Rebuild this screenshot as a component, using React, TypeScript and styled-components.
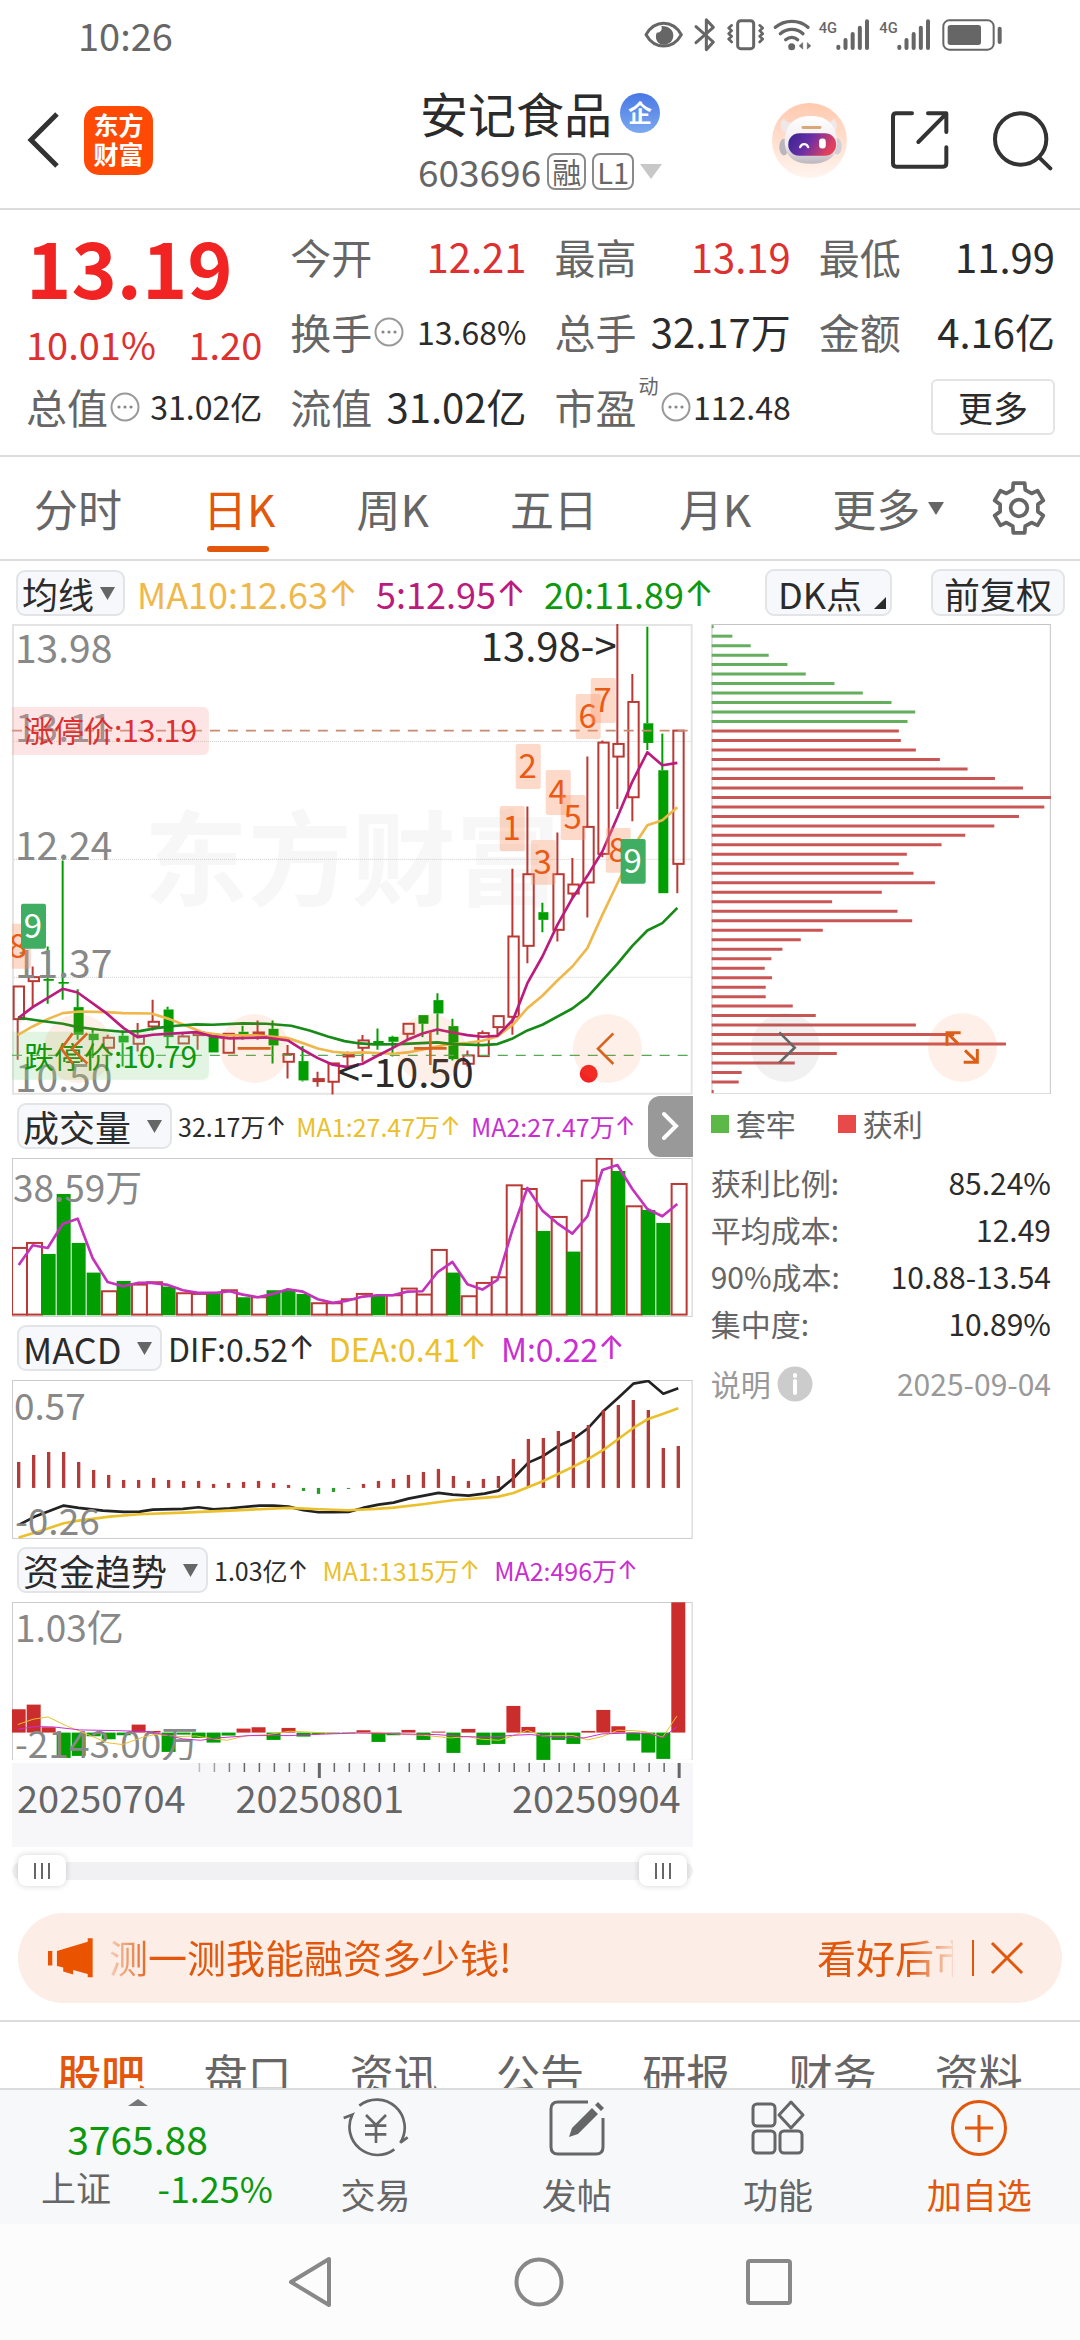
import React from "react";
import styled, { createGlobalStyle, css } from "styled-components";

const ORANGE = "#e2570c";
const RED = "#dd3030";
const GREEN = "#0d980d";
const GREY = "#666666";
const INK = "#2b2b2b";
const UP = "#bb3834";
const DOWN = "#009e00";
const MAGENTA = "#bb1b7c";
const PURPLE = "#c92fd0";
const GOLD = "#eac02c";
const AMBER = "#efb84c";

const GlobalStyle = createGlobalStyle`
  * { box-sizing: border-box; }
  body {
    margin: 0;
    background: #fff;
    color: ${INK};
    font-family: "Noto Sans CJK SC", "Noto Sans", sans-serif;
  }
  button, input, select { font: inherit; color: inherit; }
  button { border: 0; padding: 0; background: none; cursor: pointer; }
  svg { display: block; flex: none; }
  h1, p, dl, dd, dt { margin: 0; font-weight: 400; }
`;

const Page = styled.div`
  height: 100vh;
  display: flex;
  flex-direction: column;
  background: #fff;
`;

const Scroller = styled.main`
  flex: 1;
  min-height: 0;
  overflow-y: auto;
  scrollbar-width: none;
`;

/* ---------- status bar ---------- */

const StatusBar = styled.div`
  flex: none;
  height: 72px;
  padding: 0 76px 3px 78px;
  display: flex;
  align-items: center;
  justify-content: space-between;
  font-size: 38px;
  line-height: 48px;
  color: ${GREY};
`;

function StatusIcons() {
  const bars = (x: number) =>
    [0, 1, 2, 3, 4].map((i) => (
      <line key={i} x1={x + i * 21.5} x2={x + i * 21.5} y1={[114, 94, 76, 57, 38][i]} y2={118} />
    ));
  return (
    <svg width="360" height="35" viewBox="40 25 1080 105" fill="none" stroke={GREY} strokeWidth="9" strokeLinecap="round" strokeLinejoin="round">
      <path d="M46 78C60 54 80 44 99 44s39 10 53 34c-14 24-34 34-53 34S60 102 46 78Z" />
      <path d="M92 52c4 12-2 20-14 20-8 22 6 36 22 36 17 0 28-12 28-28 0-17-15-29-36-28Z" fill={GREY} stroke="none" />
      <path d="M196 54l52 46-21 23V33l21 23-52 46" />
      <rect x="321" y="36" width="48" height="84" rx="9" />
      <path d="M303 50l-9 8 9 8-9 9 9 8-9 8 9 9M387 50l9 8-9 8 9 9-9 8 9 8-9 9" strokeWidth="8" />
      <path d="M434 56c28-24 72-24 98 0M449 75c20-17 50-17 68 0M465 93c11-9 26-9 36 0" strokeWidth="10" />
      <circle cx="483" cy="114" r="6" fill={GREY} />
      <path d="M516 103v18l-10-9ZM530 103v18l10-9Z" fill={GREY} strokeWidth="2" />
      <text x="564" y="73" fontSize="44" fontWeight="500" fill={GREY} stroke="none" fontFamily="Roboto, sans-serif">4G</text>
      <g strokeWidth="12">{bars(623)}</g>
      <text x="746" y="73" fontSize="44" fontWeight="500" fill={GREY} stroke="none" fontFamily="Roboto, sans-serif">4G</text>
      <g strokeWidth="12">{bars(806)}</g>
      <rect x="938" y="35" width="151" height="88" rx="18" strokeWidth="6" />
      <rect x="951" y="49" width="100" height="60" rx="8" fill={GREY} stroke="none" />
      <path d="M1107 60v40" strokeWidth="12" />
    </svg>
  );
}

/* ---------- title bar ---------- */

const TitleBar = styled.header`
  height: 138px;
  padding: 0 26px;
  display: grid;
  grid-template-columns: 1fr auto 1fr;
  align-items: center;
  border-bottom: 2px solid #dcdcdc;
`;

const BarSide = styled.div<{ $end?: boolean }>`
  display: flex;
  align-items: center;
  gap: ${(p) => (p.$end ? 42 : 24)}px;
  justify-content: ${(p) => (p.$end ? "flex-end" : "flex-start")};
`;

const IconButton = styled.button`
  display: flex;
  align-items: center;
  justify-content: center;
`;

const BrandLogo = styled.a`
  width: 69px;
  height: 69px;
  padding-top: 4px;
  border-radius: 15px;
  background: #ff4a06;
  color: #fff;
  font-size: 25px;
  font-weight: 700;
  line-height: 29px;
  text-align: center;
  text-decoration: none;
`;

const TitleBlock = styled.div`
  padding-top: 4px;
  display: flex;
  flex-direction: column;
  align-items: center;
`;

const TitleLine = styled.div<{ $sub?: boolean }>`
  height: 59px;
  display: flex;
  align-items: center;
  gap: ${(p) => (p.$sub ? 6 : 8)}px;
  font-size: 37px;
  line-height: 59px;
  color: ${(p) => (p.$sub ? GREY : INK)};
`;

const StockName = styled.h1`
  font-size: 48px;
  line-height: 59px;
  font-weight: 400;
`;

const CompanyBadge = styled.span`
  width: 40px;
  height: 40px;
  border-radius: 50%;
  background: linear-gradient(#4877e6, #7ca9ee);
  color: #fff;
  font-size: 24px;
  font-weight: 700;
  line-height: 38px;
  text-align: center;
`;

const CodeBadge = styled.span`
  height: 37px;
  padding: 0 3px;
  border: 2px solid #8a8a8a;
  border-radius: 8px;
  font-size: 29px;
  line-height: 32px;
`;

function Triangle({ w = 15, h = 13, color = GREY, up }: { w?: number; h?: number; color?: string; up?: boolean }) {
  return (
    <svg width={w} height={h} viewBox="0 0 10 10" preserveAspectRatio="none">
      <path d={up ? "M0 10h10L5 0z" : "M0 0h10L5 10z"} fill={color} />
    </svg>
  );
}

function RobotIcon() {
  return (
    <svg width="77" height="77" viewBox="420 272 232 232">
      <defs>
        <linearGradient id="halo" x1="0" y1="0" x2="0" y2="1">
          <stop offset="0" stopColor="#ffc9ae" />
          <stop offset="1" stopColor="#fff5ef" />
        </linearGradient>
        <linearGradient id="visor" x1="0" y1="0" x2="1" y2="0.3">
          <stop offset="0" stopColor="#35248f" />
          <stop offset="0.5" stopColor="#6a2fa6" />
          <stop offset="1" stopColor="#e4405c" />
        </linearGradient>
        <linearGradient id="shell" x1="0" y1="0" x2="0" y2="1">
          <stop offset="0" stopColor="#ffffff" />
          <stop offset="0.6" stopColor="#efebee" />
          <stop offset="1" stopColor="#bdb6be" />
        </linearGradient>
      </defs>
      <circle cx="536" cy="388" r="113" fill="url(#halo)" />
      <path d="M458 320c-14 16-12 36 6 44l26-30c-16 2-26-2-32-14ZM610 322c12 16 12 36-4 42l-28-30c16 2 26-2 32-12Z" fill="#f0e8e8" />
      <ellipse cx="459" cy="408" rx="14" ry="25" fill="#bbb5bd" />
      <ellipse cx="619" cy="406" rx="14" ry="25" fill="#d4ced5" />
      <path d="M462 402c-4-58 26-88 78-88s82 30 78 88c-2 38-32 56-78 56s-74-18-78-56Z" fill="url(#shell)" />
      <rect x="472" y="366" width="144" height="68" rx="33" fill="url(#visor)" />
      <rect x="512" y="344" width="60" height="9" rx="4" fill="#d9a877" />
      <path d="M508 408c4-12 20-12 24 0" fill="none" stroke="#fff" strokeWidth="7" strokeLinecap="round" />
      <rect x="565" y="382" width="20" height="30" rx="9" fill="#fff" />
    </svg>
  );
}

/* ---------- quote ---------- */

const Quote = styled.section`
  padding: 9px 25px 11px 26px;
  display: grid;
  grid-template-columns: repeat(4, 1fr);
  grid-auto-rows: 75px;
  column-gap: 28px;
  border-bottom: 2px solid #dcdcdc;
`;

const PriceBlock = styled.div`
  grid-row: span 2;
  display: flex;
  flex-direction: column;
`;

const Price = styled.div`
  height: 101px;
  font-size: 77px;
  font-weight: 700;
  line-height: 94px;
  color: #f12323;
`;

const Change = styled.div`
  display: flex;
  justify-content: space-between;
  font-size: 38px;
  line-height: 48px;
  color: ${RED};
`;

const Cell = styled.div`
  display: flex;
  align-items: center;
  min-width: 0;
  font-size: 41px;
  line-height: 75px;
  white-space: nowrap;
`;

const CellLabel = styled.span`
  display: flex;
  align-items: center;
  gap: 2px;
  color: ${GREY};
`;

const CellValue = styled.span<{ $small?: boolean; $up?: boolean }>`
  margin-left: auto;
  font-size: ${(p) => (p.$small ? 32 : 40)}px;
  color: ${(p) => (p.$up ? RED : INK)};
`;

const Sup = styled.sup`
  align-self: flex-start;
  font-size: 20px;
  line-height: 34px;
`;

const MoreButton = styled.button`
  width: 124px;
  height: 56px;
  margin-left: auto;
  border: 2px solid #e4e4e4;
  border-radius: 6px;
  background: #fff;
  font-size: 35px;
  line-height: 48px;
`;

function DotsIcon() {
  return (
    <svg width="30" height="30" viewBox="0 0 30 30">
      <circle cx="15" cy="15" r="13.5" fill="none" stroke="#999" strokeWidth="2" />
      <circle cx="9" cy="15" r="1.6" fill="#888" />
      <circle cx="15" cy="15" r="1.6" fill="#888" />
      <circle cx="21" cy="15" r="1.6" fill="#888" />
    </svg>
  );
}

type QuoteItem = { label: string; value: string; up?: boolean; small?: boolean; dots?: boolean; sup?: string };

function QuoteCell({ label, value, up, small, dots, sup }: QuoteItem) {
  return (
    <Cell>
      <CellLabel>
        {label}
        {sup && <Sup>{sup}</Sup>}
        {dots && <DotsIcon />}
      </CellLabel>
      <CellValue $small={small} $up={up}>{value}</CellValue>
    </Cell>
  );
}

/* ---------- period tabs ---------- */

const PeriodTabs = styled.nav`
  height: 104px;
  padding: 0 34px;
  display: flex;
  align-items: center;
  justify-content: space-between;
  border-bottom: 2px solid #dcdcdc;
`;

const PeriodList = styled.div`
  height: 100%;
  display: flex;
  gap: 81px;
`;

const PeriodTab = styled.button<{ $active?: boolean }>`
  position: relative;
  height: 100%;
  flex: none;
  display: flex;
  align-items: center;
  gap: 8px;
  font-size: 44px;
  line-height: 60px;
  color: ${(p) => (p.$active ? ORANGE : GREY)};
  ${(p) =>
    p.$active &&
    css`
      &::after {
        content: "";
        position: absolute;
        left: 4px;
        right: 6px;
        bottom: 7px;
        height: 6px;
        border-radius: 3px;
        background: ${ORANGE};
      }
    `}
`;

function GearIcon() {
  const pts: string[] = [];
  for (let i = 0; i < 6; i++) {
    const a = (i * 60 - 90) * (Math.PI / 180);
    const add = (r: number, deg: number) => {
      const t = a + (deg * Math.PI) / 180;
      pts.push(`${(26 + r * Math.cos(t)).toFixed(1)},${(26 + r * Math.sin(t)).toFixed(1)}`);
    };
    add(18.5, -19);
    add(24.5, -13);
    add(24.5, 13);
    add(18.5, 19);
  }
  return (
    <svg width="54" height="54" viewBox="0 0 52 52" fill="none" stroke={GREY} strokeWidth="3.6" strokeLinejoin="round">
      <polygon points={pts.join(" ")} />
      <circle cx="26" cy="26" r="8" />
    </svg>
  );
}

/* ---------- indicator rows ---------- */

const IndicatorRow = styled.div<{ $inset?: number }>`
  height: 63px;
  padding-left: ${(p) => p.$inset ?? 5}px;
  display: flex;
  align-items: center;
  white-space: nowrap;
`;

const PillWrap = styled.label`
  position: relative;
  flex: none;
  display: block;
  height: 46px;

  svg {
    position: absolute;
    right: 10px;
    top: 17px;
    pointer-events: none;
  }
`;

const PillSelect = styled.select<{ $tight?: boolean }>`
  appearance: none;
  display: block;
  height: 46px;
  padding: 0 ${(p) => (p.$tight ? 28 : 38)}px 0 4px;
  border: 2px solid #e3e4e8;
  border-radius: 9px;
  background: #f7f8fb;
  color: ${INK};
  font-size: 36px;
  line-height: 40px;
`;

const PillButton = styled.button`
  position: relative;
  height: 47px;
  padding: 0 11px;
  border: 2px solid #e3e4e8;
  border-radius: 9px;
  background: #f7f8fb;
  font-size: 36px;
  line-height: 40px;

  svg {
    position: absolute;
    right: 4px;
    bottom: 5px;
  }
`;

const PillGroup = styled.div`
  margin-left: auto;
  padding-right: 15px;
  display: flex;
  gap: 39px;

  button:first-child {
    padding-right: 28px;
  }
`;

function Pill({ name, tight }: { name: string; tight?: boolean }) {
  return (
    <PillWrap>
      <PillSelect $tight={tight} aria-label={name} defaultValue={name}>
        <option>{name}</option>
      </PillSelect>
      <Triangle w={15} h={13} />
    </PillWrap>
  );
}

const Readings = styled.div<{ $size: number; $gap: number; $wide?: boolean }>`
  padding-left: ${(p) => (p.$wide ? 12 : 6)}px;
  display: flex;
  align-items: center;
  gap: ${(p) => p.$gap}px;
  font-size: ${(p) => p.$size}px;
  line-height: 46px;
`;

const Reading = styled.span<{ $color: string }>`
  display: flex;
  align-items: center;
  color: ${(p) => p.$color};
`;

const Arrow = styled.span`
  font-family: Inter, "DejaVu Sans", sans-serif;
`;

function Value({ text, color }: { text: string; color: string }) {
  return (
    <Reading $color={color}>
      {text}
      <Arrow>↑</Arrow>
    </Reading>
  );
}

/* ---------- charts ---------- */

const ChartArea = styled.section`
  padding: 0 29px 0 12px;
  display: grid;
  grid-template-columns: 2fr 1fr;
  column-gap: 18px;
`;

const ChartColumn = styled.div`
  min-width: 0;
  display: flex;
  flex-direction: column;
`;

const Canvas = styled.svg`
  width: 100%;
  height: auto;
`;

const ChartFrame = styled.div`
  position: relative;
`;

const ChartTools = styled.div<{ $left: number; $right: number }>`
  position: absolute;
  left: ${(p) => p.$left}px;
  right: ${(p) => p.$right}px;
  bottom: 12px;
  display: flex;
  justify-content: space-between;
`;

const RoundButton = styled.button<{ $grey?: boolean }>`
  width: 69px;
  height: 69px;
  border-radius: 50%;
  background: ${(p) => (p.$grey ? "rgba(120,120,120,0.1)" : "rgba(250,120,50,0.11)")};
`;

const ExpandButton = styled.button`
  flex: none;
  width: 45px;
  height: 61px;
  margin-left: auto;
  border-radius: 12px 0 0 12px;
  background: #999;
  display: flex;
  align-items: center;
  justify-content: center;
`;

// Bars are laid out on a 45-unit pitch inside a drawing three times the panel size.
const barX = (i: number) => 57 + 45 * i;
const scaled = (left: number, top: number) => `scale(${1 / 3}) translate(${-left} ${-top})`;

type Candle = [number, number, number, number, 0 | 1];
// wick top, body top, body bottom, wick bottom, rising
const candles: Candle[] = [
  [1130, 1130, 1228, 1350, 1], [1070, 1102, 1114, 1190, 1], [1010, 1108, 1112, 1182, 0], [752, 1117, 1120, 1170, 0],
  [1138, 1192, 1275, 1290, 0], [1255, 1272, 1291, 1345, 0], [1275, 1284, 1314, 1330, 1], [1262, 1278, 1298, 1370, 0],
  [1240, 1278, 1302, 1325, 1], [1170, 1236, 1250, 1262, 1], [1191, 1199, 1282, 1310, 0], [1268, 1280, 1301, 1301, 1],
  [1262, 1268, 1276, 1320, 1], [1272, 1272, 1328, 1328, 0], [1272, 1272, 1329, 1329, 1], [1248, 1266, 1276, 1290, 0],
  [1232, 1268, 1274, 1290, 1], [1232, 1257, 1307, 1361, 0], [1306, 1333, 1356, 1406, 1], [1309, 1354, 1412, 1415, 0],
  [1386, 1408, 1414, 1431, 1], [1361, 1361, 1416, 1454, 1], [1325, 1335, 1340, 1375, 1], [1276, 1292, 1314, 1356, 1],
  [1256, 1294, 1300, 1320, 0], [1278, 1281, 1296, 1340, 0], [1240, 1242, 1272, 1290, 1], [1216, 1216, 1242, 1282, 0],
  [1150, 1171, 1211, 1275, 0], [1227, 1249, 1348, 1352, 0], [1322, 1337, 1362, 1370, 1], [1262, 1270, 1339, 1339, 1],
  [1219, 1219, 1252, 1275, 1], [777, 980, 1221, 1275, 1], [590, 793, 1008, 1060, 1], [879, 907, 930, 967, 0],
  [668, 793, 960, 995, 1], [744, 824, 851, 865, 1], [440, 651, 818, 923, 1], [392, 398, 732, 742, 1],
  [42, 402, 440, 597, 1], [192, 276, 562, 634, 1], [50, 340, 399, 420, 0], [371, 481, 850, 850, 0],
  [362, 362, 762, 850, 1],
];

const ma5 = "57,1224 99,1192 189,1137 234,1148 320,1210 372,1255 414,1282 460,1275 590,1267 640,1280 690,1286 800,1283 865,1292 910,1320 955,1345 1000,1365 1045,1372 1089,1362 1134,1338 1179,1315 1224,1290 1269,1271 1314,1259 1359,1268 1404,1276 1449,1281 1494,1278 1541,1230 1584,1120 1629,1040 1674,945 1719,865 1764,798 1809,725 1854,622 1899,515 1944,427 1989,466 2034,459";
const ma10 = "54,1276 99,1250 144,1228 189,1210 240,1205 320,1207 370,1210 455,1211 510,1228 560,1248 610,1268 680,1277 770,1277 865,1285 910,1300 955,1316 1000,1326 1045,1330 1089,1328 1180,1332 1225,1328 1290,1315 1340,1305 1404,1299 1449,1293 1494,1280 1540,1245 1584,1195 1629,1158 1674,1112 1719,1070 1764,1015 1809,915 1864,800 1899,715 1944,646 1989,631 2034,592";
const ma20 = "54,1223 115,1232 190,1242 235,1252 300,1260 370,1266 420,1264 470,1255 530,1248 590,1244 640,1245 730,1241 800,1242 875,1248 930,1262 985,1280 1035,1294 1080,1301 1125,1304 1200,1303 1314,1298 1360,1303 1449,1306 1494,1303 1540,1286 1584,1262 1629,1245 1719,1196 1764,1162 1854,1062 1899,1008 1944,962 1989,940 2034,894";

// count marks: centre x, top y in panel pixels
const marks: [string, number, number, boolean?][] = [
  ["8", 6, 300], ["9", 21, 280, true],
  ["1", 500, 182], ["2", 516, 120], ["3", 531, 216], ["4", 546, 146], ["5", 561, 171],
  ["6", 576, 70], ["7", 591, 54], ["8", 606, 204], ["9", 621, 215, true],
];

function AxisText({ x, y, children, size = 39, fill = "#888", anchor = "start", weight = 400 }: {
  x: number; y: number; children: string; size?: number; fill?: string; anchor?: "start" | "middle" | "end"; weight?: number;
}) {
  return (
    <text x={x} y={y} fontSize={size} fill={fill} textAnchor={anchor} fontWeight={weight}>{children}</text>
  );
}

function Frame({ w, h, color = "#cccccc" }: { w: number; h: number; color?: string }) {
  return <rect x="0.5" y="0.5" width={w - 1} height={h - 1} fill="none" stroke={color} />;
}

function Candlesticks() {
  return (
    <Canvas viewBox="0 0 681 471" role="img" aria-label="日K">
      <AxisText x={132} y={274} size={104} weight={700} fill="#f7f7f7">东方财富</AxisText>
      <g stroke="#cfcfcf" strokeDasharray="1 1">
        <path d="M0 117.5H681M0 235.5H681M0 353.5H681" />
      </g>
      <rect x="1" y="1" width="679" height="469" fill="none" stroke="#e4e4e4" strokeWidth="2" />
      <g transform={scaled(37, 42)} fill="none">
        {candles.map(([top, a, b, bottom, up], i) => {
          const c = up ? UP : DOWN;
          return (
            <g key={i} stroke={c} strokeWidth="6">
              <path d={`M${barX(i) - 3} ${top}V${a}M${barX(i) - 3} ${b}V${bottom}`} />
              {up ? (
                <rect x={barX(i) - 15} y={a} width="31" height={b - a} strokeWidth="6" />
              ) : (
                <rect x={barX(i) - 15} y={a} width="30" height={b - a} fill={DOWN} stroke="none" />
              )}
              {b - a < 8 && <path d={`M${barX(i) - 15} ${a + 2}h30`} strokeWidth="5" />}
            </g>
          );
        })}
        <path d="M37 362H2070" stroke="#c98a72" strokeWidth="5" strokeDasharray="30 24" />
        <path d="M37 1337H2070" stroke="#55a955" strokeWidth="4" strokeDasharray="30 24" />
      </g>
      {[["13.98", 39], ["13.11", 118], ["12.24", 236], ["11.37", 354], ["10.50", 468]].map(([t, y]) => (
        <AxisText key={t} x={3} y={y as number}>{t as string}</AxisText>
      ))}
      <path d="M0 83H191a6 6 0 0 1 6 6v36a6 6 0 0 1-6 6H0Z" fill="rgba(248,160,160,0.28)" />
      <path d="M0 408H191a6 6 0 0 1 6 6v36a6 6 0 0 1-6 6H0Z" fill="rgba(150,220,150,0.28)" />
      <AxisText x={12} y={118} size={30} fill={RED}>涨停价:13.19</AxisText>
      <AxisText x={12} y={444} size={30} fill={GREEN}>跌停价:10.79</AxisText>
      <g transform={scaled(37, 42)} fill="none" strokeWidth="8" strokeLinejoin="round">
        <polyline points={ma10} stroke={AMBER} />
        <polyline points={ma20} stroke="#178a17" />
        <polyline points={ma5} stroke={MAGENTA} />
      </g>
      {marks.map(([n, x, y, solid], i) => (
        <g key={i}>
          <rect x={x - 12} y={y} width="25" height="45" rx="2" fill={solid ? "#3fae62" : "rgba(250,150,105,0.36)"} />
          <AxisText x={x} y={y + 34} size={33} anchor="middle" fill={solid ? "#fff" : "#ea5a14"}>{n}</AxisText>
        </g>
      ))}
      <AxisText x={605} y={37} fill={INK} anchor="end" size={40}>13.98-&gt;</AxisText>
      <AxisText x={326} y={463} fill={INK} size={40}>&lt;-10.50</AxisText>
      <circle cx="577" cy="450" r="9" fill="#f12323" />
    </Canvas>
  );
}

const volumes: [number, 0 | 1][] = [
  [474, 1], [459, 1], [492, 0], [312, 0], [459, 0], [548, 0], [604, 1], [573, 0], [584, 1], [577, 1], [590, 0], [610, 1],
  [612, 1], [612, 0], [601, 1], [622, 0], [622, 1], [601, 0], [601, 0], [612, 0], [640, 1], [640, 1], [628, 1], [612, 1],
  [618, 0], [616, 1], [596, 1], [614, 1], [480, 1], [548, 0], [619, 1], [579, 1], [562, 1], [286, 1], [297, 1], [423, 0],
  [381, 1], [485, 0], [272, 1], [206, 1], [243, 0], [349, 1], [360, 0], [399, 0], [282, 1],
];
const volumeLine = "57,525 99,466 144,474 189,402 234,386 279,505 324,576 370,589 414,579 455,579 505,585 550,601 595,609 650,609 690,604 730,614 775,622 820,612 865,598 910,605 955,628 1000,639 1045,632 1090,620 1134,616 1179,616 1224,605 1269,604 1314,547 1359,516 1404,583 1449,599 1494,570 1539,420 1584,294 1629,362 1674,400 1719,431 1764,379 1809,240 1854,225 1899,297 1944,357 1989,379 2034,342";

function VolumeChart() {
  return (
    <Canvas viewBox="0 0 681 159" role="img" aria-label="成交量">
      <Frame w={681} h={159} />
      <g transform={scaled(37, 204)}>
        {volumes.map(([y, up], i) =>
          up ? (
            <rect key={i} x={barX(i) - 20} y={y} width="45" height={674 - y} fill="#fff" stroke={UP} strokeWidth="6" />
          ) : (
            <rect key={i} x={barX(i) - 21} y={y} width="42" height={676 - y} fill={DOWN} />
          )
        )}
      </g>
      <AxisText x={1} y={44} size={37}>38.59万</AxisText>
      <g transform={scaled(37, 204)}>
        <polyline points={volumeLine} fill="none" stroke="#c433bb" strokeWidth="8" strokeLinejoin="round" />
      </g>
    </Canvas>
  );
}

const macd = [
  1116, 1095, 1086, 1086, 1116, 1140, 1155, 1170, 1170, 1164, 1170, 1173, 1173, 1182, 1179, 1176, 1173, 1179, 1185,
  1203, 1212, 1206, 1197, 1182, 1173, 1167, 1155, 1146, 1137, 1158, 1173, 1167, 1158, 1107, 1047, 1044, 1023, 1026,
  1005, 961, 945, 930, 960, 1074, 1068,
];
const difLine = "57,1305 110,1278 192,1247 237,1254 310,1262 372,1266 420,1265 460,1259 550,1257 597,1252 642,1258 690,1255 780,1247 822,1247 867,1250 912,1261 957,1267 1000,1267 1047,1266 1090,1254 1137,1244 1182,1238 1227,1226 1317,1209 1360,1214 1407,1217 1455,1211 1497,1202 1542,1165 1587,1118 1632,1098 1677,1068 1722,1047 1767,1014 1812,964 1857,923 1902,881 1947,873 1992,911 2037,895";
const deaLine = "57,1343 120,1324 192,1300 237,1292 330,1280 420,1273 550,1268 690,1262 867,1254 960,1258 1045,1261 1130,1257 1182,1253 1270,1243 1360,1231 1450,1224 1497,1220 1542,1209 1587,1191 1632,1173 1722,1130 1767,1107 1812,1080 1857,1047 1902,1014 1947,987 1992,971 2037,955";

function MacdChart() {
  return (
    <Canvas viewBox="0 0 681 159" role="img" aria-label="MACD">
      <Frame w={681} h={159} />
      <g transform={scaled(37, 870)} fill="none" strokeLinejoin="round">
        <polyline points={difLine} stroke="#222" strokeWidth="8" />
        {macd.map((y, i) => (
          <path key={i} d={`M${barX(i)} 1194V${y}`} stroke={y < 1194 ? "#b23c3a" : "#2a9a2a"} strokeWidth="10" />
        ))}
        <polyline points={deaLine} stroke={GOLD} strokeWidth="8" />
      </g>
      <AxisText x={2} y={40} size={37}>0.57</AxisText>
      <AxisText x={3} y={155} size={37}>-0.26</AxisText>
    </Canvas>
  );
}

const flows = [
  508, 494, 562, 654, 648, 589, 598, 586, 554, 573, 636, 584, 594, 608, 587, 566, 562, 600, 564, 590, 582, 582, 581, 571,
  606, 586, 570, 600, 575, 639, 567, 615, 612, 498, 561, 660, 600, 612, 573, 510, 559, 602, 638, 657, 187,
];
const flowMa1 = "54,554 100,538 145,531 201,558 268,585 321,608 368,614 429,592 469,583 536,590 589,588 643,597 683,601 737,588 804,584 871,574 938,577 1018,581 1138,577 1205,583 1272,586 1353,594 1406,590 1446,598 1500,601 1540,588 1584,571 1627,588 1721,587 1765,600 1808,590 1855,571 1902,572 1942,576 1990,592 2033,528";
const flowMa2 = "54,568 107,560 161,561 241,570 348,572 442,575 496,584 549,597 603,601 656,594 750,587 871,587 964,583 1071,579 1205,582 1312,584 1393,590 1473,592 1540,586 1594,584 1661,591 1754,594 1808,582 1902,579 1955,582 1990,594 2033,560";

function FlowChart() {
  return (
    <Canvas viewBox="0 0 681 159" role="img" aria-label="资金趋势">
      <Frame w={681} h={159} />
      <g transform={scaled(37, 186)}>
        {flows.map((y, i) => (
          <rect key={i} x={barX(i) - 21} y={Math.min(y, 578)} width="42" height={Math.abs(578 - y)} fill={y < 578 ? "#cb2c2c" : DOWN} />
        ))}
      </g>
      <AxisText x={3} y={40} size={37}>1.03亿</AxisText>
      <AxisText x={3} y={156} size={37}>-2143.00万</AxisText>
      <g transform={scaled(37, 186)} fill="none" strokeWidth="3">
        <polyline points={flowMa1} stroke={GOLD} />
        <polyline points={flowMa2} stroke={PURPLE} />
      </g>
    </Canvas>
  );
}

const AxisStrip = styled.div`
  margin-top: 3px;
  background: #f7f7fa;
`;

function DateAxis() {
  return (
    <AxisStrip>
      <Canvas viewBox="0 0 681 84" role="img" aria-label="日期">
        {Array.from({ length: 33 }, (_, k) => {
          const i = k + 12;
          const major = i === 20 || i === 44;
          return (
            <path key={i} d={`M${7.5 + 15 * i} 0v${major ? 15 : 9}`} stroke={GREY} strokeWidth={major ? 3 : 1.5} opacity={i < 15 ? (i - 10) / 5 : 1} />
          );
        })}
        <AxisText x={5} y={50} size={38} fill={GREY}>20250704</AxisText>
        <AxisText x={308} y={50} size={38} fill={GREY} anchor="middle">20250801</AxisText>
        <AxisText x={669} y={50} size={38} fill={GREY} anchor="end">20250904</AxisText>
      </Canvas>
    </AxisStrip>
  );
}

const RangeTrack = styled.div`
  position: relative;
  height: 18px;
  margin: 15px 0 33px;
  border-radius: 9px;
  background: #f1f1f4;
`;

const thumb = css`
  appearance: none;
  pointer-events: auto;
  width: 48px;
  height: 31px;
  border: 0;
  border-radius: 8px;
  background:
    linear-gradient(#666, #666) 16px 8px / 2px 16px no-repeat,
    linear-gradient(#666, #666) 23px 8px / 2px 16px no-repeat,
    linear-gradient(#666, #666) 30px 8px / 2px 16px no-repeat,
    #fff;
  box-shadow: 0 0 6px rgba(0, 0, 0, 0.18);
`;

const RangeInput = styled.input`
  appearance: none;
  position: absolute;
  left: 6px;
  top: -7px;
  width: calc(100% - 12px);
  height: 31px;
  margin: 0;
  background: none;
  pointer-events: none;
  &::-webkit-slider-thumb { ${thumb} }
`;

const chips = [
  69, 125, 180, 234, 290, 345, 431, 516, 602, 673, 650, 624, 630, 675, 747, 830, 912, 996, 1080, 1060, 984, 910, 823, 752,
  648, 624, 668, 732, 573, 424, 620, 664, 396, 330, 275, 242, 222, 244, 225, 225, 306, 375, 675, 790, 945, 438, 312, 153,
  144, 69,
];

function ChipChart() {
  return (
    <Canvas viewBox="0 0 340 470" role="img" aria-label="筹码分布">
      <rect x="1" y="0.5" width="338" height="469" fill="none" stroke="#c4c4c4" />
      <g transform={scaled(61, 42)} strokeWidth="9">
        {chips.map((x, i) => (
          <path key={i} d={`M63 ${50 + 28.43 * i}H${x}`} stroke={i < 11 ? "#64ae5d" : "#ca5555"} />
        ))}
      </g>
    </Canvas>
  );
}

const SideText = styled.div`
  font-size: 30px;
  line-height: 47px;
`;

const Legend = styled.div`
  padding: 6px 0 12px;
  display: flex;
  color: ${GREY};
`;

const LegendItem = styled.span<{ $color: string }>`
  width: 127px;
  display: flex;
  align-items: center;
  gap: 7px;

  &::before {
    content: "";
    width: 18px;
    height: 18px;
    background: ${(p) => p.$color};
  }
`;

const Stat = styled.div<{ $muted?: boolean }>`
  display: flex;
  align-items: center;
  justify-content: space-between;
  color: ${(p) => (p.$muted ? "#999" : INK)};
  margin-top: ${(p) => (p.$muted ? 13 : 0)}px;
`;

const StatLabel = styled.dt`
  color: ${GREY};
`;

const HelpButton = styled.button`
  display: flex;
  align-items: center;
  gap: 6px;
  color: #999;
  line-height: 47px;
`;

/* ---------- banner ---------- */

const Banner = styled.aside`
  height: 90px;
  margin: 0 18px 17px;
  padding: 0 38px 0 30px;
  border-radius: 45px;
  background: #fceee6;
  display: flex;
  align-items: center;
  color: ${ORANGE};
  font-size: 39px;
  line-height: 50px;
`;

const Ticker = styled.a`
  flex: 1;
  min-width: 0;
  margin: 0 19px 0 16px;
  padding-bottom: 4px;
  display: flex;
  justify-content: space-between;
  overflow: hidden;
  white-space: nowrap;
  color: inherit;
  text-decoration: none;
  mask-image: linear-gradient(90deg, rgba(0, 0, 0, 0.2), #000 44px, #000 calc(100% - 44px), rgba(0, 0, 0, 0.15));

  span:last-child {
    margin-right: -20px;
  }
`;

const CloseButton = styled(IconButton)`
  padding-left: 16px;
  border-left: 2px solid ${ORANGE};
  height: 36px;
`;

/* ---------- content tabs, dock, system bar ---------- */

const ContentTabs = styled.nav`
  padding: 20px 28px;
  border-top: 2px solid #dcdcdc;
  display: grid;
  grid-template-columns: repeat(7, 1fr);
`;

const ContentTab = styled.button<{ $active?: boolean }>`
  font-size: 44px;
  line-height: 62px;
  font-weight: ${(p) => (p.$active ? 500 : 400)};
  color: ${(p) => (p.$active ? ORANGE : GREY)};
`;

const Dock = styled.footer`
  flex: none;
  height: 136px;
  border-top: 2px solid #dcdcdc;
  background: #f7f8fa;
  display: grid;
  grid-template-columns: 275px repeat(4, 1fr);
`;

const IndexBlock = styled.button`
  padding-bottom: 16px;
  display: flex;
  flex-direction: column;
  align-items: center;
  justify-content: flex-end;
`;

const IndexValue = styled.span`
  margin-top: 4px;
  font-size: 39px;
  line-height: 56px;
  color: ${GREEN};
`;

const IndexRow = styled.span`
  width: 100%;
  padding: 0 2px 0 41px;
  display: flex;
  justify-content: space-between;
  font-size: 35px;
  line-height: 42px;
  color: ${GREY};

  em {
    font-style: normal;
    font-size: 36px;
    color: ${GREEN};
  }
`;

const DockItem = styled.button<{ $accent?: boolean }>`
  padding-top: 8px;
  display: flex;
  flex-direction: column;
  align-items: center;
  gap: 11px;
  font-size: 35px;
  line-height: 50px;
  color: ${(p) => (p.$accent ? ORANGE : GREY)};
`;

const SystemBar = styled.nav`
  flex: none;
  height: 116px;
  padding: 0 286px;
  background: #fcfcfc;
  display: flex;
  align-items: center;
  justify-content: space-between;
`;

const quoteItems: QuoteItem[] = [
  { label: "今开", value: "12.21", up: true },
  { label: "最高", value: "13.19", up: true },
  { label: "最低", value: "11.99" },
  { label: "换手", value: "13.68%", small: true, dots: true },
  { label: "总手", value: "32.17万" },
  { label: "金额", value: "4.16亿" },
  { label: "总值", value: "31.02亿", small: true, dots: true },
  { label: "流值", value: "31.02亿" },
  { label: "市盈", value: "112.48", small: true, dots: true, sup: "动" },
];

const stats = [
  ["获利比例:", "85.24%"],
  ["平均成本:", "12.49"],
  ["90%成本:", "10.88-13.54"],
  ["集中度:", "10.89%"],
];

export default function App() {
  return (
    <Page>
      <GlobalStyle />
      <StatusBar>
        <span>10:26</span>
        <StatusIcons />
      </StatusBar>

      <Scroller>
        <TitleBar>
          <BarSide>
            <IconButton aria-label="返回">
              <svg width="34" height="56" viewBox="0 0 34 56" fill="none" stroke="#333" strokeWidth="5">
                <path d="M31 2L5 28l26 26" />
              </svg>
            </IconButton>
            <BrandLogo href="#home">东方<br />财富</BrandLogo>
          </BarSide>
          <TitleBlock>
            <TitleLine>
              <StockName>安记食品</StockName>
              <CompanyBadge>企</CompanyBadge>
            </TitleLine>
            <TitleLine $sub>
              603696
              <CodeBadge>融</CodeBadge>
              <CodeBadge>L1</CodeBadge>
              <Triangle w={22} h={15} color="#c8c8c8" />
            </TitleLine>
          </TitleBlock>
          <BarSide $end>
            <IconButton aria-label="助手"><RobotIcon /></IconButton>
            <IconButton aria-label="分享">
              <svg width="60" height="60" viewBox="770 298 180 180" fill="none" stroke="#333" strokeWidth="12" strokeLinecap="round" strokeLinejoin="round">
                <path d="M836 308H789q-10 0-10 10V458q0 10 10 10H929q10 0 10-10V410M884 308H939V364M936 312L855 394" />
              </svg>
            </IconButton>
            <IconButton aria-label="搜索">
              <svg width="62" height="62" viewBox="1080 290 186 186" fill="none" stroke="#333" strokeWidth="12" strokeLinecap="round">
                <circle cx="1166" cy="380" r="77" />
                <path d="M1222 436l33 32" />
              </svg>
            </IconButton>
          </BarSide>
        </TitleBar>

        <Quote>
          <PriceBlock>
            <Price>13.19</Price>
            <Change><span>10.01%</span><span>1.20</span></Change>
          </PriceBlock>
          {quoteItems.map((q) => <QuoteCell key={q.label} {...q} />)}
          <Cell><MoreButton>更多</MoreButton></Cell>
        </Quote>

        <PeriodTabs>
          <PeriodList>
            {["分时", "日K", "周K", "五日", "月K"].map((t) => (
              <PeriodTab key={t} $active={t === "日K"}>{t}</PeriodTab>
            ))}
            <PeriodTab>更多<Triangle w={16} h={13} /></PeriodTab>
          </PeriodList>
          <IconButton aria-label="设置"><GearIcon /></IconButton>
        </PeriodTabs>

        <IndicatorRow $inset={16}>
          <Pill name="均线" tight />
          <Readings $size={36} $gap={18} $wide>
            <Value text="MA10:12.63" color={AMBER} />
            <Value text="5:12.95" color={MAGENTA} />
            <Value text="20:11.89" color={GREEN} />
          </Readings>
          <PillGroup>
            <PillButton>
              DK点
              <svg width="12" height="12" viewBox="0 0 12 12"><path d="M12 0v12H0z" fill={INK} /></svg>
            </PillButton>
            <PillButton>前复权</PillButton>
          </PillGroup>
        </IndicatorRow>

        <ChartArea>
          <ChartColumn>
            <ChartFrame>
              <Candlesticks />
              <ChartTools $left={32} $right={51}>
                {[
                  ["最左", "M218 1270l-34 46 34 45M262 1270l-46 46 46 45", 132],
                  ["缩小", "M711 1315H810", 658],
                  ["放大", "M192 1315H290M241 1266V1365", 138],
                  ["左移", "M791 1270l-46 46 46 46", 670],
                ].map(([name, d, x]) => (
                  <RoundButton key={name} aria-label={name as string}>
                    <svg width="69" height="69" viewBox={`${x} 1212 207 207`} fill="none" stroke="#d9641f" strokeWidth="8">
                      <path d={d as string} />
                    </svg>
                  </RoundButton>
                ))}
              </ChartTools>
            </ChartFrame>

            <IndicatorRow>
              <Pill name="成交量" />
              <Readings $size={25} $gap={10}>
                <Value text="32.17万" color={INK} />
                <Value text="MA1:27.47万" color={GOLD} />
                <Value text="MA2:27.47万" color={PURPLE} />
              </Readings>
              <ExpandButton aria-label="展开">
                <svg width="20" height="32" viewBox="0 0 20 32" fill="none" stroke="#fff" strokeWidth="4" strokeLinecap="round">
                  <path d="M4 4l12 12L4 28" />
                </svg>
              </ExpandButton>
            </IndicatorRow>
            <VolumeChart />

            <IndicatorRow>
              <Pill name="MACD" />
              <Readings $size={32} $gap={14}>
                <Value text="DIF:0.52" color={INK} />
                <Value text="DEA:0.41" color={GOLD} />
                <Value text="M:0.22" color={PURPLE} />
              </Readings>
            </IndicatorRow>
            <MacdChart />

            <IndicatorRow>
              <Pill name="资金趋势" />
              <Readings $size={25} $gap={14}>
                <Value text="1.03亿" color={INK} />
                <Value text="MA1:1315万" color={GOLD} />
                <Value text="MA2:496万" color={PURPLE} />
              </Readings>
            </IndicatorRow>
            <FlowChart />
            <DateAxis />
            <RangeTrack>
              <RangeInput type="range" aria-label="开始日期" defaultValue={0} />
              <RangeInput type="range" aria-label="结束日期" defaultValue={100} />
            </RangeTrack>
          </ChartColumn>

          <ChartColumn>
            <ChartFrame>
              <ChipChart />
              <ChartTools $left={40} $right={54}>
                <RoundButton $grey aria-label="收起">
                  <svg width="69" height="69" viewBox="181 1212 207 207" fill="none" stroke="#666" strokeWidth="8">
                    <path d="M266 1270l46 46-46 45" />
                  </svg>
                </RoundButton>
                <RoundButton aria-label="全屏">
                  <svg width="69" height="69" viewBox="712 1212 207 207" fill="none" stroke="#dc5f18" strokeWidth="9">
                    <path d="M810 1271H769V1310M771 1273l33 33M819 1360H860V1320M858 1358l-35-34" />
                  </svg>
                </RoundButton>
              </ChartTools>
            </ChartFrame>
            <SideText>
              <Legend>
                <LegendItem $color="#5db947">套牢</LegendItem>
                <LegendItem $color="#e84a4a">获利</LegendItem>
              </Legend>
              <dl>
                {stats.map(([k, v]) => (
                  <Stat key={k}><StatLabel>{k}</StatLabel><dd>{v}</dd></Stat>
                ))}
              </dl>
              <Stat $muted>
                <HelpButton>
                  说明
                  <svg width="36" height="36" viewBox="0 0 36 36">
                    <circle cx="18" cy="18" r="17.5" fill="#ccc" />
                    <path d="M18 15v12M18 9v1" stroke="#fff" strokeWidth="4" strokeLinecap="round" />
                  </svg>
                </HelpButton>
                <span>2025-09-04</span>
              </Stat>
            </SideText>
          </ChartColumn>
        </ChartArea>

        <Banner>
          <svg width="45" height="40" viewBox="144 113 136 120" fill="#ea5400">
            <path d="M144 152h13v44h-13zM171 152l93-28v-11h15v118h-15v-10l-44-12v14l-30-9v-12l-19-5z" />
          </svg>
          <Ticker href="#margin"><span>测一测我能融资多少钱!</span><span>看好后市</span></Ticker>
          <CloseButton aria-label="关闭">
            <svg width="34" height="34" viewBox="0 0 34 34" stroke={ORANGE} strokeWidth="3"><path d="M2 2l30 30M32 2L2 32" /></svg>
          </CloseButton>
        </Banner>

        <ContentTabs>
          {["股吧", "盘口", "资讯", "公告", "研报", "财务", "资料"].map((t, i) => (
            <ContentTab key={t} $active={i === 0}>{t}</ContentTab>
          ))}
        </ContentTabs>
      </Scroller>

      <Dock>
        <IndexBlock>
          <Triangle w={20} h={7} color="#777" up />
          <IndexValue>3765.88</IndexValue>
          <IndexRow>上证<em>-1.25%</em></IndexRow>
        </IndexBlock>
        <DockItem>
          <svg width="66" height="60" viewBox="1028 594 198 180" fill="none" stroke={GREY} strokeWidth="8">
            <path d="M1077 617A84 84 0 0 1 1200 728L1222 712M1182 748A84 84 0 0 1 1056 644L1030 654" />
            <path d="M1097 645l30 30 30-30M1094 677h64M1094 703h64M1127 675v54" />
          </svg>
          交易
        </DockItem>
        <DockItem>
          <svg width="60" height="60" viewBox="0 0 60 60" fill="none" stroke={GREY} strokeWidth="3">
            <path d="M41 4H11q-7 0-7 7v38q0 7 7 7h38q7 0 7-7V20" />
            <path d="M22 39l3-9 20-20 6 6-20 20zM48 7l3-3 6 6-3 3z" fill={GREY} stroke="none" />
          </svg>
          发帖
        </DockItem>
        <DockItem>
          <svg width="60" height="60" viewBox="0 0 60 60" fill="none" stroke={GREY} strokeWidth="3" strokeLinejoin="round">
            <rect x="5" y="6" width="22" height="22" rx="4" />
            <rect x="5" y="33" width="22" height="22" rx="4" />
            <rect x="32" y="33" width="22" height="22" rx="4" />
            <path d="M43 4l12 13-12 13-12-13z" />
          </svg>
          功能
        </DockItem>
        <DockItem $accent>
          <svg width="60" height="60" viewBox="0 0 60 60" fill="none" stroke={ORANGE} strokeWidth="3">
            <circle cx="30" cy="30" r="26.5" />
            <path d="M30 17v27M16 30h28" />
          </svg>
          加自选
        </DockItem>
      </Dock>

      <SystemBar>
        <IconButton aria-label="后退">
          <svg width="48" height="52" viewBox="0 0 48 52" fill="none" stroke="#888" strokeWidth="4" strokeLinejoin="round"><path d="M43 3v46L5 26z" /></svg>
        </IconButton>
        <IconButton aria-label="主屏幕">
          <svg width="50" height="50" viewBox="0 0 50 50" fill="none" stroke="#888" strokeWidth="4"><circle cx="25" cy="25" r="22.5" /></svg>
        </IconButton>
        <IconButton aria-label="最近任务">
          <svg width="50" height="50" viewBox="0 0 50 50" fill="none" stroke="#888" strokeWidth="4"><rect x="4" y="4" width="42" height="42" rx="2" /></svg>
        </IconButton>
      </SystemBar>
    </Page>
  );
}
